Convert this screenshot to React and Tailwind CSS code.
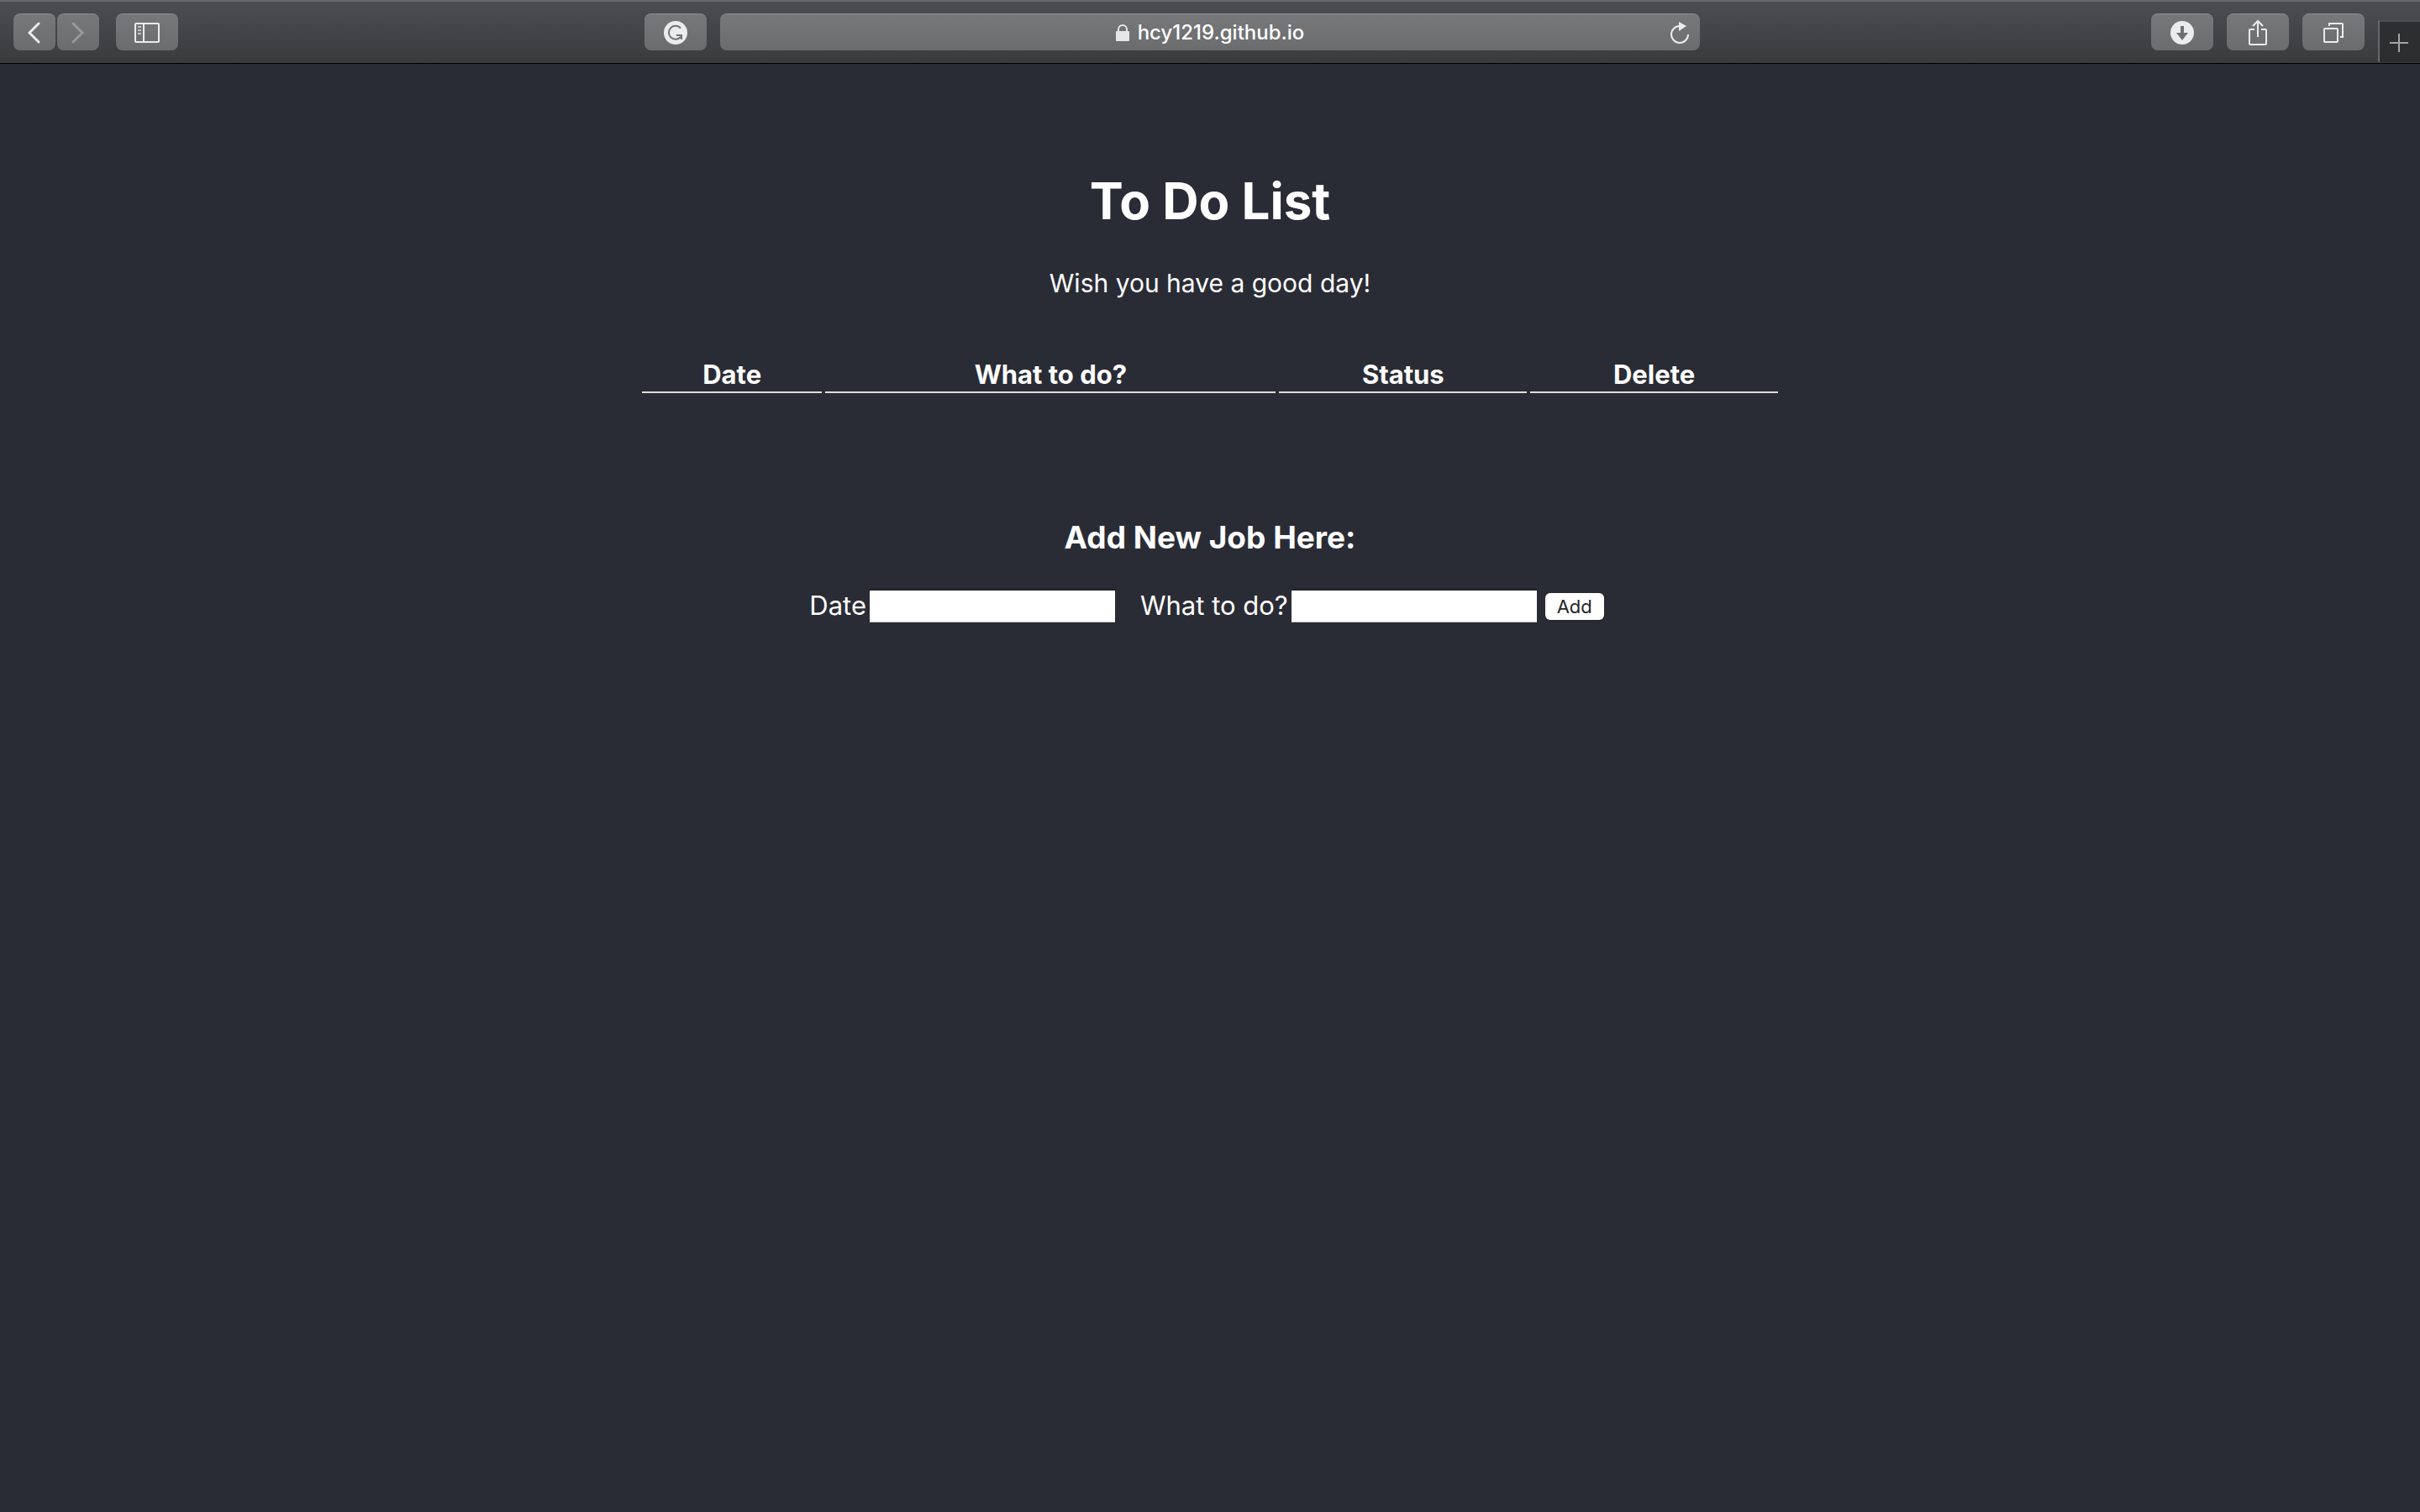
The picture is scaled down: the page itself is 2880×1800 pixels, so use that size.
import React from "react";

const toolButton =
  "flex h-11 items-center justify-center rounded-lg border-t border-[#8b8c8d] bg-linear-to-b from-[#77787a] to-[#6b6c6e] text-[#ececec]";

function ToolButton({ label, width = "w-[74px]", children }) {
  return (
    <button type="button" aria-label={label} className={`${toolButton} ${width}`}>
      {children}
    </button>
  );
}

function Toolbar() {
  return (
    <header className="grid h-19 grid-cols-[767fr_1256fr_857fr] border-t-2 border-b border-t-[#68696b] border-b-black bg-linear-to-b from-[#4b4d50] to-[#3a3b3d]">
      <div className="flex items-start pt-3.5 pl-4">
        <div className="flex gap-0.5">
          <ToolButton label="Back" width="w-[50px]">
            <svg width="16" height="26" viewBox="0 0 16 26" fill="none" stroke="currentColor" strokeWidth="3">
              <path d="M13 2 2 13l11 11" strokeLinecap="round" />
            </svg>
          </ToolButton>
          <ToolButton label="Forward" width="w-[50px]">
            <svg width="16" height="26" viewBox="0 0 16 26" fill="none" stroke="#989999" strokeWidth="3">
              <path d="m2 2 11 11L2 24" strokeLinecap="round" />
            </svg>
          </ToolButton>
        </div>
        <div className="ml-5 flex">
          <ToolButton label="Show sidebar">
            <svg width="30" height="24" viewBox="0 0 30 24" fill="none" stroke="currentColor" strokeWidth="2">
              <rect x="1" y="1" width="28" height="22" rx="1" />
              <path d="M11 1v22" />
              <path d="M4 5h4M4 9h4M4 13h4" stroke="#c4c4c5" />
            </svg>
          </ToolButton>
        </div>
      </div>

      <div className="flex items-start gap-4 pt-3.5">
        <ToolButton label="Grammar extension">
          <svg width="28" height="28" viewBox="0 0 28 28" fill="none">
            <circle cx="14" cy="14" r="14" fill="currentColor" />
            <path d="M20 8.500A8 8 0 1 0 20 19" stroke="#707173" strokeWidth="2" />
            <path d="M15 17h6v5" stroke="#707173" strokeWidth="2" />
          </svg>
        </ToolButton>
        <div className="flex h-11 flex-1 items-center rounded-lg border-t border-[#8b8c8d] bg-linear-to-b from-[#77787a] to-[#6b6c6e] pr-3">
          <div className="flex flex-1 items-center justify-center gap-2.5 pl-9">
            <svg width="16" height="20" viewBox="0 0 16 20" fill="none">
              <path d="M3 9V6a5 5 0 0 1 10 0v3" stroke="#e6e6e6" strokeWidth="2" />
              <rect y="8" width="16" height="12" rx="1" fill="#e6e6e6" />
            </svg>
            <span className="text-2xl leading-8 font-medium text-white">hcy1219.github.io</span>
          </div>
          <button type="button" aria-label="Reload page" className="text-[#ececec]">
            <svg width="24" height="28" viewBox="0 0 24 28" fill="none">
              <path d="M22 16a10 10 0 1 1-10-10" stroke="currentColor" strokeWidth="2" />
              <path d="M11 1v11l9-6z" fill="currentColor" />
            </svg>
          </button>
        </div>
      </div>

      <div className="flex items-start justify-end gap-4">
        <div className="flex gap-4 pt-3.5">
          <ToolButton label="Downloads">
            <svg width="28" height="28" viewBox="0 0 28 28">
              <circle cx="14" cy="14" r="14" fill="currentColor" />
              <path d="M12 6h4v8h5l-7 9-7-9h5z" fill="#6f7072" />
            </svg>
          </ToolButton>
          <ToolButton label="Share">
            <svg width="24" height="32" viewBox="0 0 24 32" fill="none" stroke="currentColor" strokeWidth="2">
              <path d="M8 12H3a1 1 0 0 0-1 1v16a1 1 0 0 0 1 1h18a1 1 0 0 0 1-1V13a1 1 0 0 0-1-1h-5" />
              <path d="M12 21V2M6 8l6-6 6 6" />
            </svg>
          </ToolButton>
          <ToolButton label="Show tab overview">
            <svg width="24" height="24" viewBox="0 0 24 24" fill="none" stroke="currentColor" strokeWidth="2">
              <rect x="1" y="7" width="16" height="16" rx="1" />
              <path d="M7 4V1h15a1 1 0 0 1 1 1v15h-3" />
            </svg>
          </ToolButton>
        </div>
        <button
          type="button"
          aria-label="New tab"
          className="mt-5.5 flex h-[50px] w-[50px] items-center justify-center border-t-2 border-l-2 border-t-[#4f5153] border-l-[#66686a] bg-[#2d2e2f] pt-0.5 pr-0.5"
        >
          <svg width="22" height="22" viewBox="0 0 22 22" fill="none" stroke="#a3a4a5" strokeWidth="2">
            <path d="M11 0v22M0 11h22" />
          </svg>
        </button>
      </div>
    </header>
  );
}

const columns = [
  { name: "Date", width: "w-[16%]" },
  { name: "What to do?", width: "w-[40%]" },
  { name: "Status", width: "w-[22%]" },
  { name: "Delete", width: "w-[22%]" },
];

const fieldClass =
  "h-10 w-[292px] border-t-2 border-b border-t-[#1f2126] border-b-[#c4c4c4] bg-white px-1 text-[22px] text-black outline-none";

export default function App() {
  return (
    <div className="min-h-screen bg-[#2a2c35] font-['Inter',sans-serif] text-white">
      <Toolbar />
      <main className="flex flex-col items-center text-[31px] leading-10">
        <h1 className="mt-[125px] text-[60px] leading-[76px] font-bold">To Do List</h1>
        <p className="mt-10 text-[30px]">Wish you have a good day!</p>

        <table className="mt-[69px] w-[1360px] max-w-full table-fixed border-separate border-spacing-x-1 border-spacing-y-0">
          <thead>
            <tr>
              {columns.map((c) => (
                <th
                  key={c.name}
                  scope="col"
                  className={`${c.width} border-b-2 border-[#dedede] p-0 text-center font-bold`}
                >
                  {c.name}
                </th>
              ))}
            </tr>
          </thead>
          <tbody />
        </table>

        <h3 className="mt-[148px] text-[37px] leading-12 font-bold">Add New Job Here:</h3>
        <form className="mt-[37px] mr-2 flex items-center" onSubmit={(e) => e.preventDefault()}>
          <label htmlFor="job-date">Date</label>
          <input id="job-date" type="text" className={`${fieldClass} ml-1`} />
          <label htmlFor="job-text" className="ml-[30px]">
            What to do?
          </label>
          <input id="job-text" type="text" className={`${fieldClass} ml-1`} />
          <button
            type="submit"
            className="mt-0.5 ml-2.5 h-8 w-[70px] rounded-md bg-white text-[22px] leading-8 text-[#262626] shadow-sm"
          >
            Add
          </button>
        </form>
      </main>
    </div>
  );
}
